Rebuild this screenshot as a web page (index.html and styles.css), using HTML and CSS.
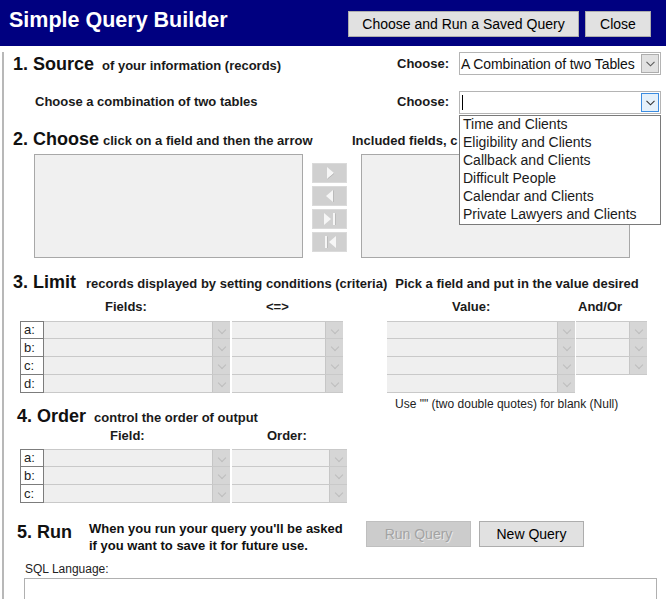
FILE: index.html
```html
<!DOCTYPE html>
<html>
<head>
<meta charset="utf-8">
<title>Simple Query Builder</title>
<link rel="stylesheet" href="styles.css">
</head>
<body>
<div class="app">
  <header class="titlebar">
    <h1 class="title">Simple Query Builder</h1>
    <div class="tb-actions">
      <button class="btn btn-saved">Choose and Run a Saved Query</button>
      <button class="btn btn-close">Close</button>
    </div>
  </header>

  <main class="content">
    <section class="pickrow row1">
      <h2 class="sec"><span class="num">1. Source</span><span class="sub">of your information (records)</span></h2>
      <div class="pick">
        <span class="pick-label">Choose:</span>
        <div class="combo">
          <span class="combo-text">A Combination of two Tables</span>
          <span class="drop"><svg width="9" height="6" viewBox="0 0 9 6"><polyline points="0.5,0.8 4.5,4.8 8.5,0.8" fill="none" stroke="#5a5a5a" stroke-width="1.1"/></svg></span>
        </div>
      </div>
    </section>

    <section class="pickrow row2">
      <span class="row2-label">Choose a combination of two tables</span>
      <div class="pick">
        <span class="pick-label">Choose:</span>
        <div class="combo focus">
          <span class="caret"></span>
          <span class="drop"><svg width="9" height="6" viewBox="0 0 9 6"><polyline points="0.5,0.8 4.5,4.8 8.5,0.8" fill="none" stroke="#333" stroke-width="1.1"/></svg></span>
          <ul class="dropdown">
            <li>Time and Clients</li>
            <li>Eligibility and Clients</li>
            <li>Callback and Clients</li>
            <li>Difficult People</li>
            <li>Calendar and Clients</li>
            <li>Private Lawyers and Clients</li>
          </ul>
        </div>
      </div>
    </section>

    <section class="choose">
      <div class="choose-head">
        <h2 class="sec sec-choose"><span class="num">2. Choose</span><span class="sub sub-tight">click on a field and then the arrow</span></h2>
        <span class="included">Included fields, c</span>
      </div>
      <div class="lists">
        <div class="listbox"></div>
        <div class="movers">
          <div class="mover"><svg width="10" height="14" viewBox="0 0 10 14"><polygon points="2,1 9,7 2,13" fill="#f6f6f6"/><line x1="2.5" y1="13" x2="9" y2="7.5" stroke="#bbb" stroke-width="1"/></svg></div>
          <div class="mover"><svg width="10" height="14" viewBox="0 0 10 14"><polygon points="8,1 1,7 8,13" fill="#f6f6f6"/><line x1="8.5" y1="1.5" x2="8.5" y2="13" stroke="#bbb" stroke-width="1"/></svg></div>
          <div class="mover"><svg width="14" height="14" viewBox="0 0 14 14"><polygon points="1,1 8,7 1,13" fill="#f6f6f6"/><rect x="10" y="1" width="2" height="12" fill="#f6f6f6"/><line x1="12.5" y1="1.5" x2="12.5" y2="13" stroke="#bbb" stroke-width="1"/></svg></div>
          <div class="mover"><svg width="14" height="14" viewBox="0 0 14 14"><rect x="2" y="1" width="2" height="12" fill="#f6f6f6"/><polygon points="13,1 6,7 13,13" fill="#f6f6f6"/><line x1="4.5" y1="1.5" x2="4.5" y2="13" stroke="#bbb" stroke-width="1"/></svg></div>
        </div>
        <div class="listbox"></div>
      </div>
    </section>

    <section class="limit">
      <h2 class="sec"><span class="num">3. Limit</span><span class="sub sub-limit">records displayed by setting conditions (criteria)</span><span class="sub sub-pick">Pick a field and put in the value desired</span></h2>
      <div class="limit-cols">
        <div class="limit-left">
          <div class="colheads">
            <span class="ch ch-fields">Fields:</span>
            <span class="ch ch-op">&lt;=&gt;</span>
          </div>
          <div class="grid">
            <div class="grow"><span class="key">a:</span><span class="gsel w-field"><i class="garrow"></i></span><span class="gsel w-op"><i class="garrow"></i></span></div>
            <div class="grow"><span class="key">b:</span><span class="gsel w-field"><i class="garrow"></i></span><span class="gsel w-op"><i class="garrow"></i></span></div>
            <div class="grow"><span class="key">c:</span><span class="gsel w-field"><i class="garrow"></i></span><span class="gsel w-op"><i class="garrow"></i></span></div>
            <div class="grow"><span class="key">d:</span><span class="gsel w-field"><i class="garrow"></i></span><span class="gsel w-op"><i class="garrow"></i></span></div>
          </div>
        </div>
        <div class="limit-right">
          <div class="colheads">
            <span class="ch ch-value">Value:</span>
            <span class="ch ch-andor">And/Or</span>
          </div>
          <div class="grid">
            <div class="grow"><span class="gsel w-value"><i class="garrow"></i></span><span class="gsel w-andor"><i class="garrow"></i></span></div>
            <div class="grow"><span class="gsel w-value"><i class="garrow"></i></span><span class="gsel w-andor"><i class="garrow"></i></span></div>
            <div class="grow"><span class="gsel w-value"><i class="garrow"></i></span><span class="gsel w-andor"><i class="garrow"></i></span></div>
            <div class="grow"><span class="gsel w-value"><i class="garrow"></i></span></div>
          </div>
          <p class="note">Use "" (two double quotes) for blank (Null)</p>
        </div>
      </div>
    </section>

    <section class="order">
      <h2 class="sec sec-order"><span class="num">4. Order</span><span class="sub">control the order of output</span></h2>
      <div class="colheads">
        <span class="ch ch-field">Field:</span>
        <span class="ch ch-order">Order:</span>
      </div>
      <div class="grid">
        <div class="grow"><span class="key">a:</span><span class="gsel w-field"><i class="garrow"></i></span><span class="gsel w-order"><i class="garrow"></i></span></div>
        <div class="grow"><span class="key">b:</span><span class="gsel w-field"><i class="garrow"></i></span><span class="gsel w-order"><i class="garrow"></i></span></div>
        <div class="grow"><span class="key">c:</span><span class="gsel w-field"><i class="garrow"></i></span><span class="gsel w-order"><i class="garrow"></i></span></div>
      </div>
    </section>

    <section class="run">
      <h2 class="sec sec-run"><span class="num">5. Run</span></h2>
      <p class="run-desc">When you run your query you'll be asked<br>if you want to save it for future use.</p>
      <div class="run-actions">
        <button class="btn btn-run" disabled>Run Query</button>
        <button class="btn btn-new">New Query</button>
      </div>
    </section>

    <section class="sql">
      <div class="sql-label">SQL Language:</div>
      <div class="sql-box"></div>
    </section>
  </main>
</div>
</body>
</html>
```

FILE: styles.css
```css
* { box-sizing: border-box; }
html, body { margin: 0; padding: 0; }
body {
  font-family: "Liberation Sans", Arial, sans-serif;
  color: #1a1a1a;
  background: #ffffff;
  width: 666px;
  height: 599px;
  overflow: hidden;
}

/* Title bar */
.titlebar {
  height: 46px;
  background: #000080;
  display: flex;
  align-items: flex-start;
  justify-content: space-between;
  padding: 0 15px 0 9px;
}
.title {
  margin: 0;
  color: #ffffff;
  font-size: 21.5px;
  font-weight: bold;
  line-height: 40px;
}
.tb-actions {
  display: flex;
  gap: 6px;
  margin-top: 11px;
}
.btn {
  height: 26px;
  background: #e1e1e1;
  border: 1px solid #adadad;
  font: 14px "Liberation Sans", Arial, sans-serif;
  color: #000;
  padding: 0;
}
.btn-saved { width: 231px; }
.btn-close { width: 66px; }

/* Content area */
.content {
  margin-left: 2px;
  border-left: 2px solid #b8b8b8;
  padding: 0 5px 0 9px;
  height: 553px;
}

.sec {
  margin: 0;
  font-size: 18px;
  font-weight: bold;
  line-height: 20px;
  color: #111;
  white-space: nowrap;
}
.sub {
  font-size: 13px;
  font-weight: bold;
  margin-left: 8px;
  color: #1a1a1a;
}

/* Rows 1 & 2 */
.pickrow {
  display: flex;
  align-items: center;
  height: 23px;
}
.row1 { margin-top: 6px; }
.row1 .sec { margin-top: 2px; }
.row2 { margin-top: 16px; }
.row2-label {
  font-size: 13px;
  font-weight: bold;
  padding-left: 22px;
  margin-bottom: 2px;
}
.row2 .pick-label { margin-bottom: 2px; }
.pick {
  margin-left: auto;
  display: flex;
  align-items: center;
  gap: 10px;
}
.pick-label {
  font-size: 13px;
  font-weight: bold;
}
.combo {
  position: relative;
  width: 202px;
  height: 23px;
  border: 1px solid #b4b4b4;
  background: #fff;
  display: flex;
  align-items: center;
}
.combo-text {
  font-size: 14px;
  padding-left: 1px;
  letter-spacing: -0.1px;
  color: #111;
  white-space: nowrap;
}
.caret {
  width: 1px;
  height: 15px;
  background: #000;
  margin-left: 2px;
}
.drop {
  margin-left: auto;
  margin-right: 1px;
  width: 18px;
  height: 19px;
  background: #e1e1e1;
  border: 1px solid #adadad;
  display: flex;
  align-items: center;
  justify-content: center;
  flex-shrink: 0;
}
.focus .drop {
  background: #e5f1fb;
  border-color: #3c8ce0;
}
.dropdown {
  position: absolute;
  top: 23px;
  left: -1px;
  width: 202px;
  margin: 0;
  padding: 0;
  list-style: none;
  background: #fff;
  border: 1px solid #7a7a7a;
  z-index: 5;
}
.dropdown li {
  height: 18px;
  line-height: 17px;
  font-size: 14px;
  padding-left: 3px;
  color: #1a1a1a;
  white-space: nowrap;
}

/* Section 2 */
.choose-head {
  display: flex;
  align-items: baseline;
  margin-top: 15px;
  height: 20px;
}
.sec-choose { width: 339px; }
.sub-tight { margin-left: 4px; }
.included {
  font-size: 13px;
  font-weight: bold;
  white-space: nowrap;
}
.lists {
  display: flex;
  margin-top: 5px;
  padding-left: 21px;
}
.listbox {
  width: 269px;
  height: 104px;
  background: #f0f0f0;
  border: 1px solid #a8a8a8;
}
.movers {
  display: flex;
  flex-direction: column;
  gap: 3px;
  width: 35px;
  margin: 0 14px 0 9px;
  padding-top: 9px;
}
.mover {
  height: 20px;
  background: #d0d0d0;
  border: 1px solid #dadada;
  display: flex;
  align-items: center;
  justify-content: center;
}

/* Section 3 */
.limit > .sec { margin-top: 14px; }
.sub-limit { margin-left: 10px; }
.sub-pick { margin-left: 8px; }
.limit-cols {
  display: flex;
}
.limit-left { width: 374px; }
.colheads {
  display: flex;
  height: 16px;
  line-height: 16px;
  margin-top: 5px;
  font-size: 13px;
  font-weight: bold;
  white-space: nowrap;
}
.ch-fields { margin-left: 92px; width: 161px; }
.ch-value { margin-left: 65px; width: 126px; }
.grid {
  margin-top: 6px;
  padding-left: 7px;
}
.limit-right .grid { padding-left: 0; }
.grow {
  display: flex;
  height: 18px;
}
.key {
  width: 24px;
  height: 18px;
  border: 1px solid #7c7c7c;
  border-top-width: 0;
  background: #fff;
  font-size: 13px;
  line-height: 17px;
  padding-left: 3px;
  color: #222;
}
.grow:first-child .key { border-top-width: 1px; line-height: 16px; }
.gsel {
  position: relative;
  height: 18px;
  background: #efefef;
  border-bottom: 1px solid #c9c9c9;
  display: flex;
  justify-content: flex-end;
}
.grow:first-child .gsel { border-top: 1px solid #c9c9c9; }
.w-field { width: 186px; }
.w-op { width: 111px; margin-left: 2px; }
.w-order { width: 115px; margin-left: 2px; }
.w-value { width: 188px; }
.w-andor { width: 71px; margin-left: 1px; }
.garrow {
  width: 18px;
  height: 100%;
  background: #d6d6d6;
  border-left: 1px solid #c6c6c6;
  display: block;
  position: relative;
}
.garrow::after {
  content: "";
  position: absolute;
  left: 6px;
  top: 5px;
  width: 5px;
  height: 5px;
  border-right: 1px solid #bdbdbd;
  border-bottom: 1px solid #bdbdbd;
  transform: rotate(45deg);
}
.note {
  margin: 5px 0 0 8px;
  font-size: 12px;
  line-height: 13px;
  color: #222;
  white-space: nowrap;
}

/* Section 4 */
.order { margin-top: -7px; }
.sec-order { padding-left: 4px; line-height: 24px; }
.sec-order .sub { margin-left: 8px; }
.order .colheads { margin-top: -2px; }
.ch-field { margin-left: 97px; width: 157px; }
.order .grid { margin-top: 5px; }

/* Section 5 */
.run {
  display: flex;
  align-items: flex-start;
  margin-top: 18px;
}
.sec-run {
  padding-left: 4px;
  width: 76px;
  line-height: 23px;
}
.run-desc {
  margin: -1px 0 0;
  width: 277px;
  font-size: 13px;
  font-weight: bold;
  line-height: 17px;
  color: #111;
}
.run-actions {
  display: flex;
  gap: 8px;
}
.btn-run, .btn-new { width: 105px; }
.btn-run {
  background: #cccccc;
  border-color: #bfbfbf;
  color: #a3a3a3;
  text-shadow: 1px 1px 0 #e8e8e8;
}

.sql-label {
  margin-top: 8px;
  padding-left: 12px;
  font-size: 12px;
  line-height: 14px;
  color: #222;
}
.sql-box {
  margin-top: 2px;
  margin-left: 11px;
  width: 633px;
  height: 40px;
  border: 1px solid #b0b0b0;
  background: #fff;
}
```
